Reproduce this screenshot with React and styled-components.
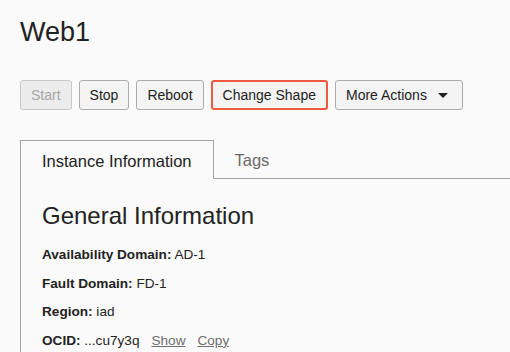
import React from "react";
import styled, { createGlobalStyle } from "styled-components";

const Global = createGlobalStyle`
  html, body { margin: 0; padding: 0; background: #fafafa; }
  body {
    font-family: "Liberation Sans", Helvetica, Arial, sans-serif;
    color: #222;
    overflow: hidden;
  }
`;

const Page = styled.div`
  padding-left: 20px;
  width: 490px;
  height: 352px;
  overflow: hidden;
`;

const Title = styled.h1`
  margin: 0;
  padding-top: 17px;
  font-size: 27px;
  font-weight: 400;
  line-height: normal;
  color: #222;
`;

const Toolbar = styled.div`
  display: flex;
  align-items: center;
  gap: 7px;
  margin-top: 32px;
`;

const Button = styled.button`
  display: inline-flex;
  align-items: center;
  height: 30px;
  box-sizing: border-box;
  padding: ${(p) => (p.$caret ? "0 14px 0 10px" : "0 10px")};
  font-family: inherit;
  font-size: 14px;
  color: ${(p) => (p.disabled ? "#a6a6a6" : "#222")};
  background: ${(p) => (p.disabled ? "#ececec" : "#f4f4f4")};
  border: ${(p) =>
    p.$highlight ? "2px solid #ef5a40" : `1px solid ${p.disabled ? "#c9c9c9" : "#acacac"}`};
  border-radius: 3px;
  cursor: ${(p) => (p.disabled ? "default" : "pointer")};
`;

const Caret = styled.span`
  margin-left: 11px;
  width: 0;
  height: 0;
  border-left: 5px solid transparent;
  border-right: 5px solid transparent;
  border-top: 5px solid #222;
`;

const TabBar = styled.div`
  display: flex;
  align-items: flex-start;
  margin-top: 30px;
  height: 39px;
  box-sizing: border-box;
  border-bottom: 1px solid #a3a3a3;
`;

const Tab = styled.div`
  display: flex;
  align-items: center;
  box-sizing: border-box;
  height: ${(p) => (p.$active ? "39px" : "38px")};
  padding: ${(p) => (p.$active ? "2px 21px 0" : "1px 20px 0")};
  font-size: 16.5px;
  color: ${(p) => (p.$active ? "#222" : "#6a6a6a")};
  background: ${(p) => (p.$active ? "#fafafa" : "transparent")};
  border: 1px solid ${(p) => (p.$active ? "#a3a3a3" : "transparent")};
  border-bottom: none;
  margin-bottom: ${(p) => (p.$active ? "-1px" : "0")};
  position: relative;
`;

const Panel = styled.div`
  border-left: 1px solid #a3a3a3;
  padding-left: 21px;
  padding-top: 23px;
  height: 200px;
`;

const Heading = styled.h2`
  margin: 0 0 11px;
  font-size: 24px;
  font-weight: 400;
  line-height: normal;
  color: #222;
`;

const Row = styled.div`
  font-size: 13.6px;
  line-height: 28.6px;
  color: #222;
  white-space: nowrap;
`;

const Label = styled.b`
  font-weight: 700;
`;

const Link = styled.a`
  margin-left: 12px;
  color: #6e6e6e;
  text-decoration: underline;
  cursor: pointer;
`;

export default function App() {
  return (
    <Page>
      <Global />
      <Title>Web1</Title>
      <Toolbar>
        <Button disabled>Start</Button>
        <Button>Stop</Button>
        <Button>Reboot</Button>
        <Button $highlight>Change Shape</Button>
        <Button $caret>
          More Actions
          <Caret />
        </Button>
      </Toolbar>
      <TabBar>
        <Tab $active>Instance Information</Tab>
        <Tab>Tags</Tab>
      </TabBar>
      <Panel>
        <Heading>General Information</Heading>
        <Row>
          <Label>Availability Domain:</Label> AD-1
        </Row>
        <Row>
          <Label>Fault Domain:</Label> FD-1
        </Row>
        <Row>
          <Label>Region:</Label> iad
        </Row>
        <Row>
          <Label>OCID:</Label> ...cu7y3q
          <Link>Show</Link>
          <Link>Copy</Link>
        </Row>
      </Panel>
    </Page>
  );
}
